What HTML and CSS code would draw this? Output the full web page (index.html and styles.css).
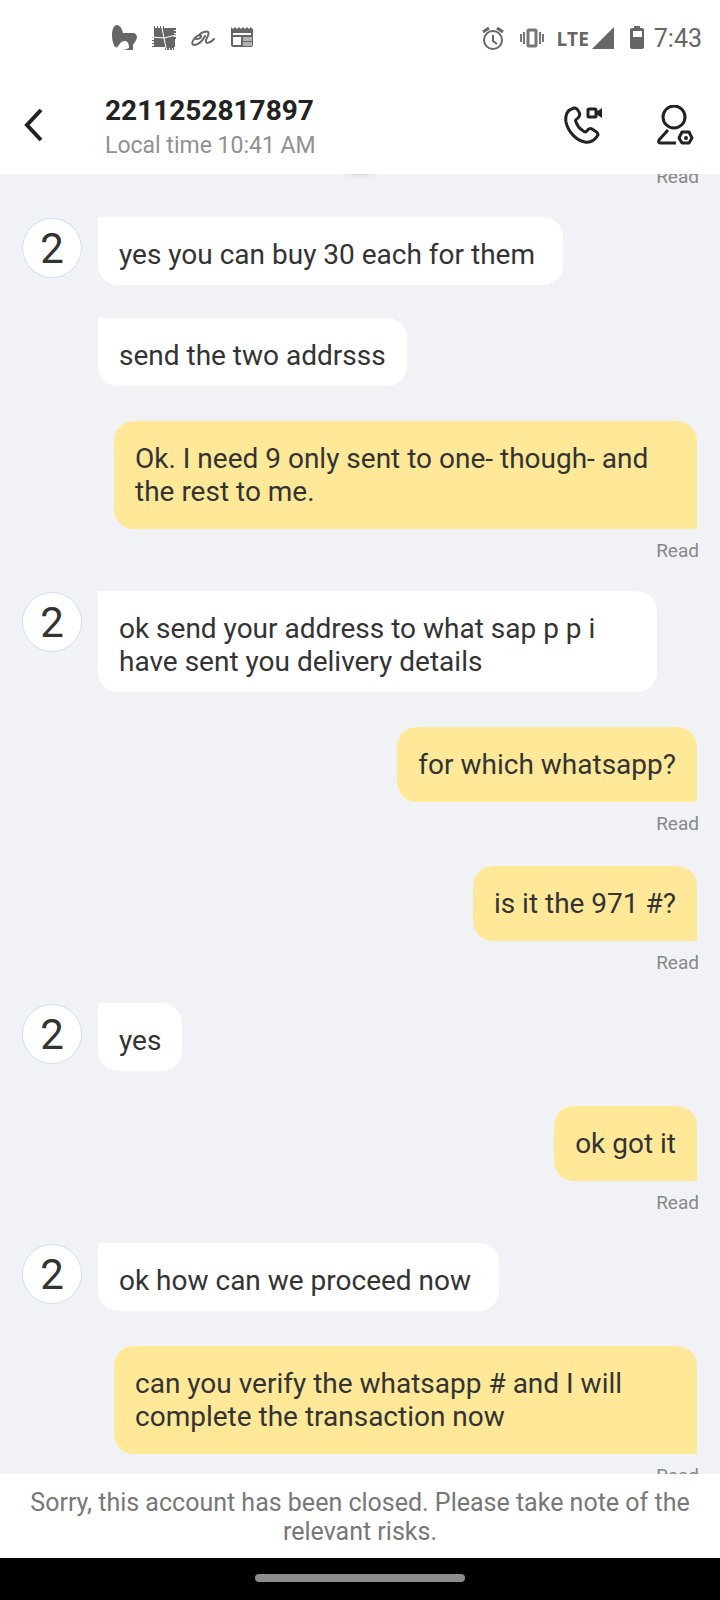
FILE: index.html
```html
<!DOCTYPE html>
<html lang="en">
<head>
<meta charset="utf-8">
<meta name="viewport" content="width=device-width, initial-scale=1">
<title>2211252817897</title>
<link rel="stylesheet" href="styles.css">
</head>
<body>
<div class="app">
  <div class="status">
    <div class="status-left">
      <svg width="26" height="26" viewBox="0 0 26 26" fill="#666"><path d="M5 0C8 0 10 4 11 8h9c4 0 5 2 5 5-1 3-3 5-4 7v5H10c3 0 5-1 7-2 0-4-1-7-4-7-4 0-5 3-7 5-1 2-3 2-4-1C1 18 0 15 0 10 0 4 2 0 5 0z"/></svg>
      <svg width="24" height="24" viewBox="0 0 24 24" fill="#666"><path d="M2 0h1v2h2V0h1v2h2V0h1v2h2V0h1v2h12v2h-2v1h2v2h-2v1h2v2h-2v1h2v2h-1v8h-1v3h-1v-2h-1v2h-2v-2h-1v2h-2v-2h-1v2h-1v-3H0v-1h2v-2H0v-1h2v-2H0v-1h2v-2H0v-1h2z"/><path d="M0 11l12 1 12-3M10 2l4 20" fill="none" stroke="#fff" stroke-width="1"/></svg>
      <svg width="26" height="24" viewBox="0 0 26 24" fill="none" stroke="#666" stroke-width="2" stroke-linecap="round" stroke-linejoin="round"><path d="M6 13c3 0 5-1 5-3-1-2-5 0-7 3-3 4-2 6 1 6 4-1 8-5 10-9"/><path d="M9 9c3-3 7-4 9-3 2 2-1 5-2 8-1 4 3 4 8-1"/></svg>
      <svg width="24" height="24" viewBox="0 0 24 24" fill="#666"><path fill-rule="evenodd" d="M1 1l2 2 2-2 2 2 2-2 2 2 2-2 2 2 2-2 2 2 2-2 1 2 1-1v17q0 2-2 2H3q-2 0-2-2zM3 7v2h18V7zM3 11v8h8v-8z"/><path d="M13 12h9M13 14h9M13 17h9M13 19h9" stroke="#fff" stroke-width="1"/></svg>
    </div>
    <div class="status-right">
      <svg width="24" height="24" viewBox="0 0 24 24" fill="none" stroke="#666" stroke-width="2"><circle cx="12" cy="14" r="9"/><path d="M12 9v6l4 3"/><path d="M2 6l6-4M22 6l-6-4" stroke-width="3"/></svg>
      <svg class="vibrate" width="26" height="20" viewBox="0 0 26 20" fill="none" stroke="#777" stroke-width="2"><rect x="9" y="2" width="8" height="16" rx="1" stroke-width="3"/><path d="M5 4v12M2 6v8M21 4v12M24 6v8"/></svg>
      <span class="lte">LTE</span>
      <svg class="signal" width="22" height="22" viewBox="0 0 22 22" fill="#666"><path d="M22 0v22H0z"/></svg>
      <svg class="battery" width="14" height="24" viewBox="0 0 14 24" fill="#666"><path fill-rule="evenodd" d="M4 0h6v2h2q2 0 2 2v17q0 2-2 2H2q-2 0-2-2V4q0-2 2-2h2zM3 5v6h9V5z"/></svg>
      <time class="clock">7:43</time>
    </div>
  </div>
  <header class="header">
    <button class="icon-btn back" aria-label="Back"><svg width="20" height="32" viewBox="0 0 20 32" fill="none" stroke="#222" stroke-width="4"><path d="M17 1L3 16l14 15"/></svg></button>
    <div class="contact">
      <h1 class="name">2211252817897</h1>
      <p class="local">Local time 10:41 AM</p>
    </div>
    <button class="icon-btn" aria-label="Call"><svg width="40" height="40" viewBox="0 0 40 40" fill="none" stroke="#222" stroke-width="3" stroke-linejoin="round"><path d="M8 4C3 5 1 11 2 17c2 10 11 19 19 20 6 1 10-2 13-7 0-2-1-3-3-4l-3-2c-2-1-4 0-5 2-1 1-3 1-5-1-3-2-5-5-6-8-1-1 0-3 2-4 2-2 2-4 1-6l-2-3Q10 2 8 4z"/><rect x="24" y="4" width="8" height="8" rx="1"/><path d="M32 7l6-4v10l-6-4z" fill="#222" stroke="none"/></svg></button>
    <button class="icon-btn" aria-label="Contact settings"><svg width="42" height="40" viewBox="0 0 42 40" fill="none" stroke="#222" stroke-width="3" stroke-linejoin="round"><circle cx="20" cy="12" r="11"/><path d="M14 25L5 35q-1 3 1 3h16"/><path d="M28 27h7l3 6-3 5h-7l-3-5z"/><circle cx="32" cy="33" r="2" fill="#222" stroke="none"/></svg></button>
  </header>
  <main class="chat">
    <div class="badge"></div>
    <div class="list">
      <div class="sent"><span class="read">Read</span></div>
      <div class="recv"><span class="avatar">2</span><p class="bubble">yes you can buy 30 each for them&nbsp;</p></div>
      <div class="recv next"><p class="bubble">send the two addrsss</p></div>
      <div class="sent"><p class="bubble">Ok. I need 9 only sent to one- though- and the rest to me.</p><span class="read">Read</span></div>
      <div class="recv"><span class="avatar">2</span><p class="bubble">ok send your address to what sap p p i have sent you delivery details</p></div>
      <div class="sent"><p class="bubble">for which whatsapp?</p><span class="read">Read</span></div>
      <div class="sent"><p class="bubble">is it the 971 #?</p><span class="read">Read</span></div>
      <div class="recv"><span class="avatar">2</span><p class="bubble">yes</p></div>
      <div class="sent"><p class="bubble">ok got it</p><span class="read">Read</span></div>
      <div class="recv"><span class="avatar">2</span><p class="bubble">ok how can we proceed now&nbsp;</p></div>
      <div class="sent"><p class="bubble">can you verify the whatsapp # and I will complete the transaction now</p><span class="read">Read</span></div>
    </div>
  </main>
  <p class="notice">Sorry, this account has been closed. Please take note of the relevant risks.</p>
  <div class="navbar"><span class="handle"></span></div>
</div>
</body>
</html>
```
FILE: styles.css
```css
* { box-sizing: border-box; }
body { margin: 0; background: #fff; font-family: Roboto, "Liberation Sans", sans-serif; color: #333; }
h1, p { margin: 0; }
svg { display: block; flex: none; }
.app { display: flex; flex-direction: column; height: 100vh; }
.status { display: flex; justify-content: space-between; align-items: center; height: 76px; padding: 0 18px 0 112px; color: #666; flex: none; }
.status-left { display: flex; align-items: center; gap: 14px; }
.status-right { display: flex; align-items: center; }
.vibrate { margin-left: 14px; }
.lte { margin-left: 11px; padding-top: 2px; font: 700 19px/24px "Open Sans", sans-serif; }
.signal { margin-left: 3px; }
.battery { margin-left: 16px; }
.clock { margin-left: 10px; padding-top: 2px; font-size: 25px; line-height: 28px; }
.header { display: flex; align-items: center; height: 98px; padding: 0 24px; flex: none; }
.icon-btn { padding: 0; border: 0; background: none; margin-left: 50px; }
.back { margin: 0; }
.contact { flex: 1; margin-left: 61px; padding-top: 3px; }
.name { font-size: 28px; line-height: 33px; font-weight: 700; color: #222; }
.local { font-size: 23px; line-height: 28px; margin-top: 5px; color: #909090; }
.chat { flex: 1; min-height: 0; overflow: hidden; position: relative; background: #f1f2f6; }
.badge { position: absolute; left: 50%; top: -48px; width: 48px; height: 48px; margin-left: -24px; border-radius: 50%; box-shadow: 0 0 6px #bbb; }
.list { display: flex; flex-direction: column; gap: 30px; margin-top: -9px; padding: 0 23px 0 22px; }
.sent { display: flex; flex-direction: column; align-items: flex-end; margin-top: 2px; padding-left: 92px; }
.sent:first-child { margin-top: 0; }
.recv { display: flex; align-items: flex-start; gap: 16px; padding: 0 40px 3px 0; }
.next { padding-left: 76px; }
.avatar { flex: none; width: 60px; height: 60px; margin-top: 1px; border: 1px solid #cfe0ef; border-radius: 50%; background: #fff; font-size: 42px; line-height: 60px; text-align: center; }
.bubble { font-size: 28px; line-height: 33px; padding: 21px; }
.recv .bubble { padding-bottom: 14px; background: #fff; border-radius: 0 20px 20px 20px; }
.sent .bubble { background: #ffe999; border-radius: 20px 20px 0 20px; }
.read { font-size: 19px; line-height: 20px; margin: 12px -2px 0 0; color: #888; }
.sent > .read:first-child { margin-top: 2px; }
.notice { flex: none; padding: 14px 24px 12px; font-size: 25px; line-height: 29px; text-align: center; color: #777; }
.navbar { flex: none; height: 42px; padding-bottom: 2px; background: #000; display: flex; justify-content: center; align-items: center; }
.handle { width: 210px; height: 8px; border-radius: 4px; background: #8c8c8c; }
```
